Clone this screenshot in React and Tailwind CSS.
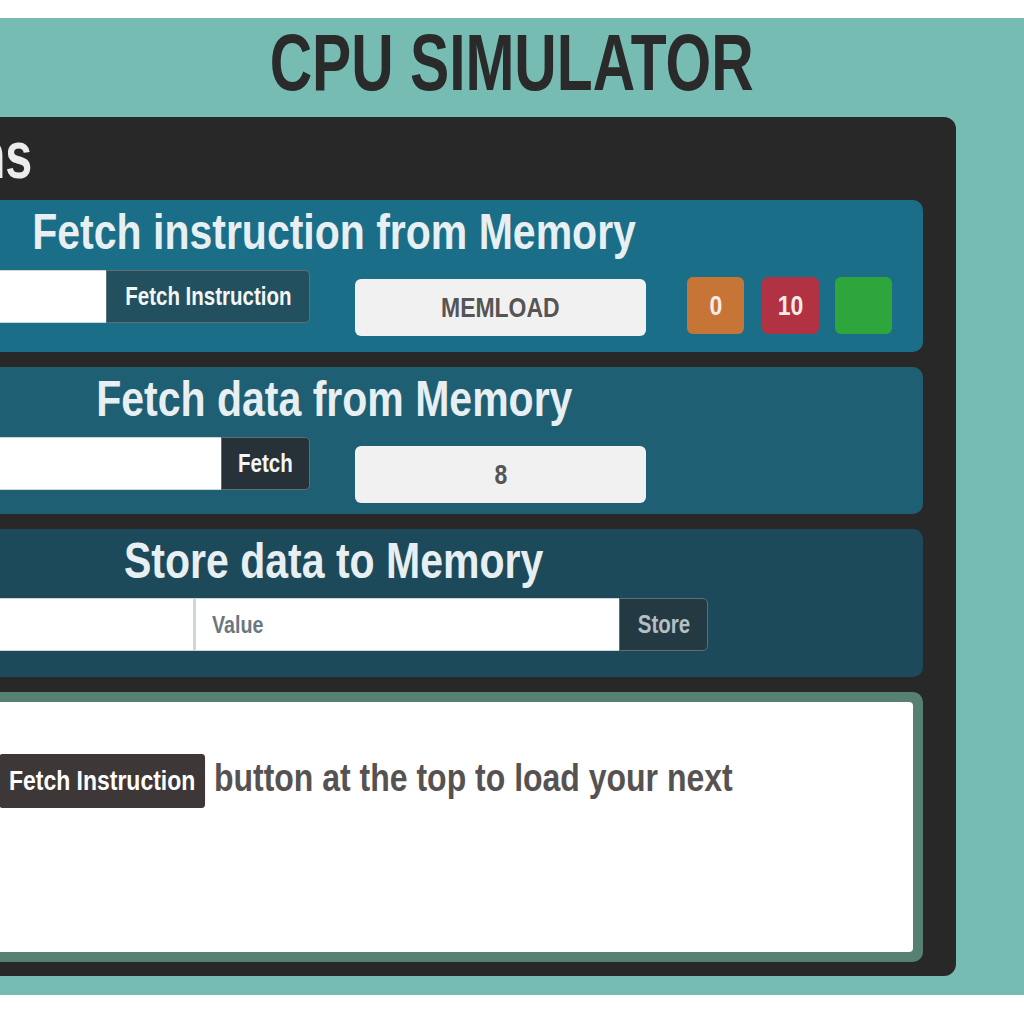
export default function App() {
  return (
    <div className="min-h-screen bg-white pt-[18px] overflow-x-hidden font-['Liberation_Sans',Arial,sans-serif] font-bold">
      <div className="bg-[#77bcb3] pb-[19px] pt-[5px]">
        <h1 className="text-center text-[80px] leading-none text-[#2a2a2a] whitespace-nowrap">
          <span className="inline-block scale-x-[0.734]">CPU SIMULATOR</span>
        </h1>
        <div className="mt-[14px] ml-[-288px] mr-[68px] bg-[#282828] rounded-[12px] px-[33px] pt-[5px] pb-[14px]">
          <h2 className="text-[66px] leading-none text-[#ececec] mb-[12px] pl-[10px] whitespace-nowrap">
            <span className="inline-block origin-left scale-x-[0.734]">Instructions</span>
          </h2>

          <div className="flex flex-col gap-[15px]">
            {/* Fetch instruction */}
            <section className="h-[152px] rounded-[10px] bg-[#1b6e88] pt-[7px] pl-[20px]">
              <h3 className="text-center text-[50px] leading-none text-[#e8eff2] pr-[20px] whitespace-nowrap">
                <span className="inline-block scale-x-[0.82]">Fetch instruction from Memory</span>
              </h3>
              <div className="mt-[13px] flex items-start">
                <div className="flex w-[545px] h-[53px]">
                  <div className="flex-1 min-w-0 bg-white border-y border-l border-[#cfd5d9]" />
                  <button className="w-[204px] bg-[#22505e] border border-[#5f6f75] rounded-r-[5px] text-[25px] text-[#f3f6f7] whitespace-nowrap">
                    <span className="inline-block scale-x-[0.82]">Fetch Instruction</span>
                  </button>
                </div>
                <div className="ml-[45px] mt-[9px] w-[291px] h-[57px] rounded-[6px] bg-[#f1f1f1] flex items-center justify-center text-[28px] text-[#555]">
                  <span className="inline-block scale-x-[0.82]">MEMLOAD</span>
                </div>
                <div className="ml-[41px] mt-[7px] w-[57px] h-[57px] rounded-[6px] bg-[#c77537] flex items-center justify-center text-[28px] text-[#f7ebe6]">
                  <span className="inline-block scale-x-[0.82]">0</span>
                </div>
                <div className="ml-[18px] mt-[7px] w-[57px] h-[57px] rounded-[6px] bg-[#b03243] flex items-center justify-center text-[28px] text-[#f7ebe6]">
                  <span className="inline-block scale-x-[0.82]">10</span>
                </div>
                <div className="ml-[16px] mt-[7px] w-[57px] h-[57px] rounded-[6px] bg-[#2ea63c]"></div>
              </div>
            </section>

            {/* Fetch data */}
            <section className="h-[147px] rounded-[10px] bg-[#1f5f73] pt-[7px] pl-[20px]">
              <h3 className="text-center text-[50px] leading-none text-[#e8eff2] pr-[20px] whitespace-nowrap">
                <span className="inline-block scale-x-[0.82]">Fetch data from Memory</span>
              </h3>
              <div className="mt-[13px] flex items-start">
                <div className="flex w-[545px] h-[53px]">
                  <div className="flex-1 min-w-0 bg-white border-y border-l border-[#cfd5d9]" />
                  <button className="w-[89px] bg-[#263238] border border-[#5f6f75] rounded-r-[5px] text-[25px] text-[#f3f6f7]">
                    <span className="inline-block scale-x-[0.82]">Fetch</span>
                  </button>
                </div>
                <div className="ml-[45px] mt-[9px] w-[291px] h-[57px] rounded-[6px] bg-[#f1f1f1] flex items-center justify-center text-[28px] text-[#555]">
                  <span className="inline-block scale-x-[0.82]">8</span>
                </div>
              </div>
            </section>

            {/* Store data */}
            <section className="h-[148px] rounded-[10px] bg-[#1d4a5a] pt-[7px] pl-[20px]">
              <h3 className="text-center text-[50px] leading-none text-[#e8eff2] pr-[20px] whitespace-nowrap">
                <span className="inline-block scale-x-[0.82]">Store data to Memory</span>
              </h3>
              <div className="mt-[12px] flex items-start">
                <div className="flex w-[943px] h-[53px]">
                  <div className="w-[431px] bg-white border-y border-l border-r-[3px] border-[#d0d5d9]" />
                  <div className="flex-1 min-w-0 bg-white border-y border-[#d0d5d9] flex items-center pl-[16px] text-[24px] text-[#6b7780]">
                    <span className="inline-block origin-left scale-x-[0.82]">Value</span>
                  </div>
                  <button className="w-[89px] bg-[#243a42] border border-[#5f6f75] rounded-r-[5px] text-[25px] text-[#b3bfc4]">
                    <span className="inline-block scale-x-[0.82]">Store</span>
                  </button>
                </div>
              </div>
            </section>

            {/* Message */}
            <section className="h-[270px] rounded-[10px] bg-[#568172] p-[10px]">
              <div className="h-full rounded-[4px] bg-white pl-[54px] pt-[46px]">
                <p className="w-[1340px] origin-left scale-x-[0.82] text-[39px] leading-[60px] text-[#575252]">
                  Click on the{" "}
                  <span className="inline-block align-middle h-[54px] leading-[54px] px-[12px] rounded-[4px] bg-[#3e3737] text-[28px] text-white">Fetch Instruction</span>{" "}
                  button at the top to load your next instruction.
                </p>
              </div>
            </section>
          </div>
        </div>
      </div>
    </div>
  );
}
